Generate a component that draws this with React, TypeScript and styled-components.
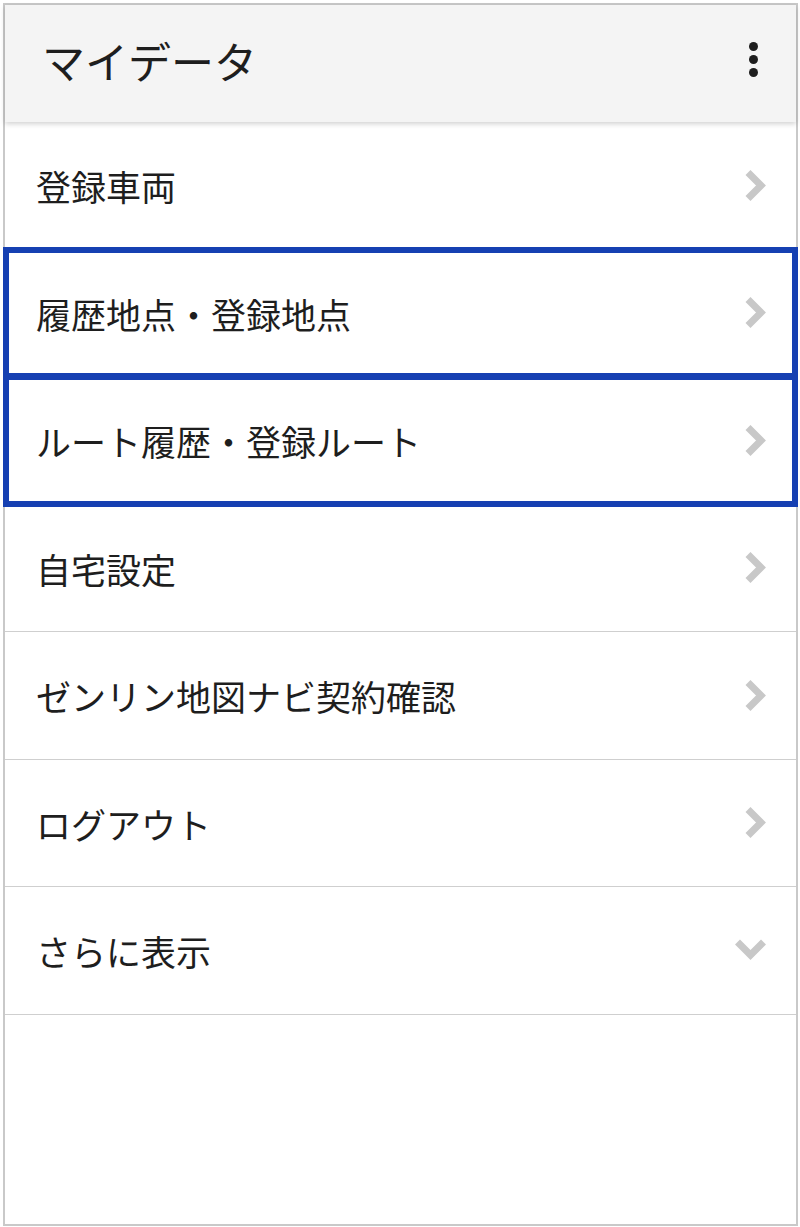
import styled, { createGlobalStyle } from "styled-components";

const GlobalStyle = createGlobalStyle`
  html, body {
    margin: 0;
    padding: 0;
    background: #fff;
  }
  body {
    font-family: "Noto Sans CJK JP", "Noto Sans", sans-serif;
  }
`;

const Page = styled.div`
  width: 800px;
  height: 1227px;
  padding: 3px 2px 1px 3px;
  box-sizing: border-box;
  background: #fff;
`;

const Panel = styled.div`
  height: 100%;
  border: 2px solid #c9c9c9;
  box-sizing: border-box;
  display: flex;
  flex-direction: column;
  background: #fff;
`;

const Header = styled.header`
  height: 117px;
  flex-shrink: 0;
  display: flex;
  align-items: center;
  justify-content: space-between;
  padding: 0 38px 0 37px;
  background: #f4f4f4;
  box-shadow: 0 2px 5px rgba(0, 0, 0, 0.18);
  position: relative;
  z-index: 1;
`;

const Title = styled.h1`
  margin: 0;
  font-size: 43px;
  font-weight: 400;
  color: #1e1e1e;
  line-height: 1;
  padding-bottom: 7px;
`;

const MenuButton = styled.button`
  border: none;
  background: none;
  padding: 0;
  margin-right: -1px;
  width: 12px;
  display: flex;
  flex-direction: column;
  align-items: center;
  gap: 4px;
  cursor: pointer;
  margin-top: -8px;
`;

const Dot = styled.span`
  width: 9px;
  height: 9px;
  border-radius: 50%;
  background: #1e1e1e;
`;

const List = styled.ul`
  list-style: none;
  margin: 0;
  padding: 0;
`;

const Row = styled.li<{ $highlight?: boolean }>`
  height: 126.5px;
  border-bottom: 1px solid #cfcfcf;
  display: flex;
  align-items: center;
  justify-content: space-between;
  padding: 0 30px 0 31px;
  position: relative;
  cursor: pointer;

  &::after {
    content: "";
    display: ${(p) => (p.$highlight ? "block" : "none")};
    position: absolute;
    top: -3px;
    bottom: -3px;
    left: -2px;
    right: -2px;
    border: 6px solid #1640b2;
    pointer-events: none;
    z-index: 2;
  }
`;

const Label = styled.span`
  font-size: 35px;
  font-weight: 400;
  color: #1e1e1e;
  line-height: 1;
  padding-top: 1px;
`;

const ChevronRight = () => (
  <svg width="21" height="31" viewBox="0 0 21 31">
    <polyline
      points="3,2.5 16,15.5 3,28.5"
      fill="none"
      stroke="#c8c8c8"
      strokeWidth="7"
      strokeLinejoin="miter"
    />
  </svg>
);

const ChevronDown = () => (
  <svg width="31" height="22" viewBox="0 0 31 22">
    <polyline
      points="2.5,3 15.5,16 28.5,3"
      fill="none"
      stroke="#c8c8c8"
      strokeWidth="7"
      strokeLinejoin="miter"
    />
  </svg>
);

const items = [
  { label: "登録車両" },
  { label: "履歴地点・登録地点", highlight: true },
  { label: "ルート履歴・登録ルート", highlight: true },
  { label: "自宅設定" },
  { label: "ゼンリン地図ナビ契約確認" },
  { label: "ログアウト" },
];

export default function App() {
  return (
    <>
      <GlobalStyle />
      <Page>
        <Panel>
          <Header>
            <Title>マイデータ</Title>
            <MenuButton type="button" aria-label="メニュー">
              <Dot />
              <Dot />
              <Dot />
            </MenuButton>
          </Header>
          <List>
            {items.map((item) => (
              <Row key={item.label} $highlight={item.highlight}>
                <Label>{item.label}</Label>
                <ChevronRight />
              </Row>
            ))}
            <Row>
              <Label>さらに表示</Label>
              <ChevronDown />
            </Row>
          </List>
        </Panel>
      </Page>
    </>
  );
}
